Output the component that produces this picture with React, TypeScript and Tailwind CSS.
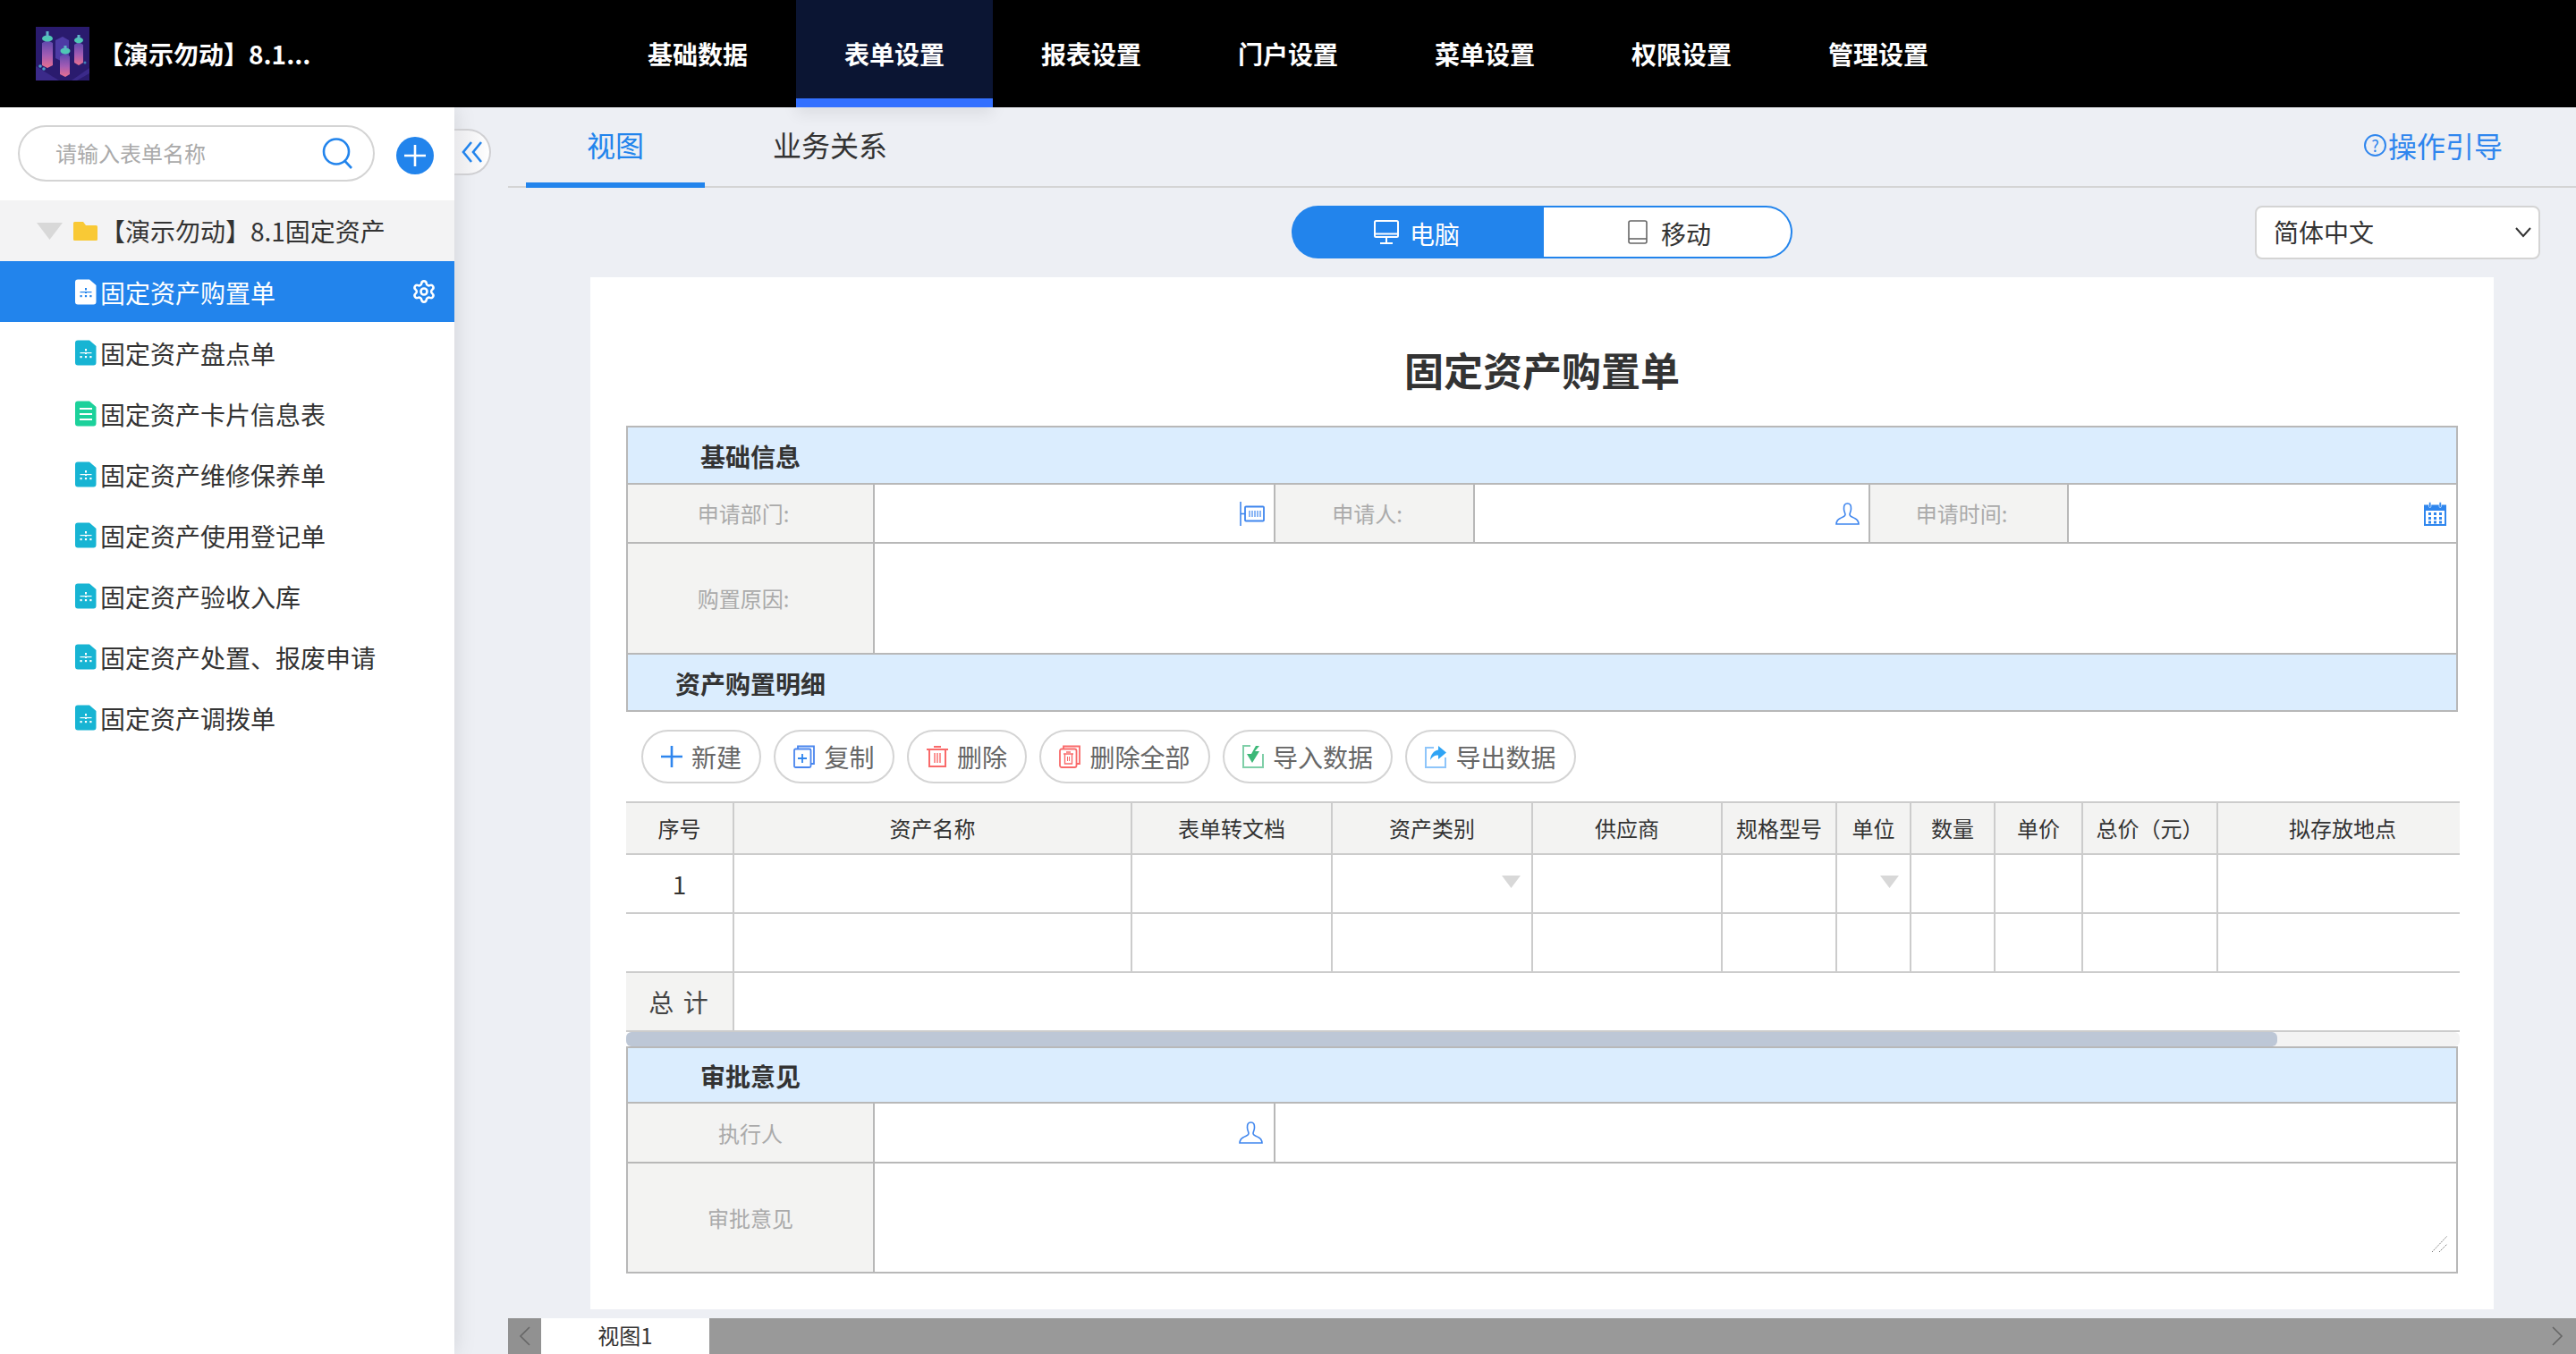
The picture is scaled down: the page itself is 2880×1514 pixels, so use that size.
import React from "react";
import { Settings } from "lucide-react";

const BLUE = "#2284ec";

function Logo() {
  return (
    <svg width="60" height="60" viewBox="0 0 60 60" className="shrink-0">
      <defs>
        <linearGradient id="lg1" x1="0" y1="0" x2="0" y2="1">
          <stop offset="0" stopColor="#5a48ad" />
          <stop offset="0.55" stopColor="#a45cb4" />
          <stop offset="1" stopColor="#e8708f" />
        </linearGradient>
        <filter id="soft"><feGaussianBlur stdDeviation="0.7" /></filter>
      </defs>
      <rect width="60" height="60" fill="#2a1b6e" />
      <g filter="url(#soft)">
        <path d="M0 44 L26 60 H40 L60 46 V52 L46 60 H0 Z" fill="#3a2a8a" />
        <path d="M22 15 L30 11 L37 15 V35 L30 39 L22 35 Z" fill="#4d3aa5" />
        <path d="M7 18 L13 15 L19 18 V43 L13 46 L7 43 Z" fill="url(#lg1)" />
        <path d="M43 20 L48 17 L53 20 V40 L48 43 L43 40 Z" fill="url(#lg1)" />
        <path d="M27 33 L33 30 L38 33 V53 L33 56 L27 53 Z" fill="url(#lg1)" />
        <ellipse cx="13" cy="13" rx="6" ry="3.6" fill="#4fc8b5" />
        <rect x="11.5" y="5" width="3" height="6" fill="#5fb3c8" />
        <ellipse cx="48" cy="15" rx="5" ry="3.2" fill="#4fc8b5" />
        <rect x="46.5" y="9" width="3" height="5" fill="#5fb3c8" />
        <ellipse cx="33" cy="27" rx="5.5" ry="3.4" fill="#4fc8b5" />
        <rect x="31.5" y="21" width="3" height="5" fill="#5fb3c8" />
        <circle cx="5" cy="44" r="1.8" fill="#4fa0c8" />
        <circle cx="9" cy="47" r="1.8" fill="#4fa0c8" />
        <circle cx="55" cy="40" r="1.5" fill="#3f7fb8" />
      </g>
    </svg>
  );
}

function DocIcon({ bg, fg, kind }: { bg: string; fg: string; kind: "org" | "list" }) {
  return (
    <svg width="24" height="29" viewBox="0 0 24 29" className="shrink-0">
      <path d="M3 0.5 H16 L23.5 7 V25.5 A3 3 0 0 1 20.5 28.5 H3 A3 3 0 0 1 0 25.5 V3.5 A3 3 0 0 1 3 0.5 Z" fill={bg} />
      {kind === "org" ? (
        <g fill={fg}>
          <rect x="11" y="10" width="2" height="2.5" />
          <rect x="11" y="14" width="2" height="2" />
          <rect x="5.5" y="14" width="13" height="1.2" />
          <rect x="5.5" y="18" width="2.2" height="2.2" />
          <rect x="10.9" y="18" width="2.2" height="2.2" />
          <rect x="16.3" y="18" width="2.2" height="2.2" />
        </g>
      ) : (
        <g fill={fg}>
          <rect x="5" y="8" width="14" height="2" />
          <rect x="5" y="14" width="14" height="2" />
          <rect x="5" y="20" width="14" height="2" />
        </g>
      )}
    </svg>
  );
}

function Triangle({ w, h }: { w: number; h: number }) {
  return (
    <svg width={w} height={h} viewBox="0 0 10 10" preserveAspectRatio="none" className="shrink-0">
      <path d="M0 0 H10 L5 10 Z" fill="#d8d8d8" />
    </svg>
  );
}

function PersonIcon() {
  return (
    <svg width="27" height="25" viewBox="0 0 27 25" fill="none" stroke="#3f86ee" strokeWidth="1.6" className="shrink-0">
      <path d="M13.5 1 C10.2 1 9.4 3.5 9.5 7 C9.6 10 11 11.5 11 13.2 C11 15.4 8.5 16.2 5.5 17.4 C2.5 18.6 1.2 20.5 1 24 H26 C25.8 20.5 24.5 18.6 21.5 17.4 C18.5 16.2 16 15.4 16 13.2 C16 11.5 17.4 10 17.5 7 C17.6 3.5 16.8 1 13.5 1 Z" />
    </svg>
  );
}

function DeptIcon() {
  return (
    <svg width="28" height="27" viewBox="0 0 28 27" fill="none" stroke="#3f86ee" className="shrink-0">
      <path d="M1 0 V27" strokeWidth="1.6" />
      <path d="M1 13.5 H6" strokeWidth="1.6" />
      <rect x="6" y="5.5" width="21" height="16" rx="1" strokeWidth="1.8" />
      <path d="M11 10 V17 M14 10 V17 M17 10 V17 M20 10 V17 M23 10 V17" strokeWidth="1.2" />
    </svg>
  );
}

function CalendarIcon() {
  return (
    <svg width="25" height="27" viewBox="0 0 25 27" className="shrink-0">
      <rect x="1" y="4.5" width="23" height="21.5" fill="none" stroke="#2f86ee" strokeWidth="2" />
      <rect x="1" y="4" width="23" height="6" fill="#2f86ee" />
      <rect x="5.5" y="0.5" width="2.4" height="6" rx="1.2" fill="#2f86ee" stroke="#fff" strokeWidth="0.6" />
      <rect x="17" y="0.5" width="2.4" height="6" rx="1.2" fill="#2f86ee" stroke="#fff" strokeWidth="0.6" />
      <g fill="#2f86ee">
        <rect x="5" y="12" width="3" height="3" />
        <rect x="11" y="12" width="3" height="3" />
        <rect x="17" y="12" width="3" height="3" />
        <rect x="5" y="17" width="3" height="3" />
        <rect x="11" y="17" width="3" height="3" />
        <rect x="17" y="17" width="3" height="3" />
        <rect x="5" y="21.5" width="3" height="3" />
        <rect x="11" y="21.5" width="3" height="3" />
        <rect x="17" y="21.5" width="3" height="3" />
      </g>
    </svg>
  );
}

function Pill({ icon, label }: { icon: React.ReactNode; label: string }) {
  return (
    <div className="h-[60px] px-[20px] flex items-center gap-[10.5px] rounded-full border-2 border-[#d4d4d4] bg-white text-[28px] leading-[36px] text-[#666]">
      <span className="w-[24px] h-[26px] flex items-center justify-center shrink-0">{icon}</span>
      <span className="whitespace-nowrap">{label}</span>
    </div>
  );
}

const PlusI = (
  <svg width="24" height="26" viewBox="0 0 24 26" fill="none" stroke="#2f86ee" strokeWidth="2.6">
    <path d="M12 1 V25 M0 13 H24" />
  </svg>
);
const CopyI = (
  <svg width="24" height="26" viewBox="0 0 24 26" fill="none" stroke="#4a86ee" strokeWidth="1.8">
    <path d="M5 4 V1.5 H23 V21 H19.5" />
    <rect x="1" y="4.5" width="18.5" height="20.5" rx="1.5" />
    <path d="M10 10 V20 M5 15 H15" stroke="#2f86ee" />
  </svg>
);
const TrashI = (
  <svg width="24" height="24" viewBox="0 0 24 24" fill="none" stroke="#f96a6a" strokeWidth="2">
    <path d="M0 4 H24" />
    <path d="M8 1 H16" />
    <path d="M3 4 V23 H21 V4" />
    <path d="M9 8 V19 M12 8 V19 M15 8 V19" strokeWidth="1.4" />
  </svg>
);
const TrashAllI = (
  <svg width="24" height="26" viewBox="0 0 24 26" fill="none" stroke="#f96a6a" strokeWidth="1.8">
    <path d="M5 4 V1.5 H23 V21 H19.5" />
    <rect x="1" y="4.5" width="18.5" height="20.5" rx="2" />
    <path d="M5 10 H16 M8 8 H13 M6.5 10 V21 H14.5 V10" strokeWidth="1.4" />
    <path d="M9.5 13 V18 M11.5 13 V18" strokeWidth="1" />
  </svg>
);
const ImportI = (
  <svg width="24" height="26" viewBox="0 0 24 26" fill="none">
    <path d="M9 1 H1 V25 H23 V10" stroke="#7fcfa8" strokeWidth="2" />
    <path d="M15 1 L19 1 L14 7 H19 L11 20 L5 10 H10 Z" fill="#3cb878" />
  </svg>
);
const ExportI = (
  <svg width="24" height="26" viewBox="0 0 24 26" fill="none">
    <path d="M10 3 H1 V25 H23 V14" stroke="#8ec5fa" strokeWidth="2" />
    <path d="M15 1 L24 8.5 L15 16 V11.5 C10.5 11.5 8 13.5 6 17 C6.5 10.5 10 6.5 15 5.5 Z" fill="#2fa4f5" />
  </svg>
);

const tree: { name: string; kind: "org" | "list" }[] = [
  { name: "固定资产盘点单", kind: "org" },
  { name: "固定资产卡片信息表", kind: "list" },
  { name: "固定资产维修保养单", kind: "org" },
  { name: "固定资产使用登记单", kind: "org" },
  { name: "固定资产验收入库", kind: "org" },
  { name: "固定资产处置、报废申请", kind: "org" },
  { name: "固定资产调拨单", kind: "org" },
];

const nav = ["基础数据", "表单设置", "报表设置", "门户设置", "菜单设置", "权限设置", "管理设置"];

const headers = ["序号", "资产名称", "表单转文档", "资产类别", "供应商", "规格型号", "单位", "数量", "单价", "总价（元）", "拟存放地点"];
const GRID = "grid grid-cols-[121px_445px_224px_224px_212px_128px_83px_94px_98px_151px_270px]";

function Label({ text, className }: { text: string; className: string }) {
  return (
    <div className={`bg-[#f3f3f2] flex items-center justify-center text-[24px] text-[#aaa] border-r-2 border-[#b8b8b8] shrink-0 ${className}`}>
      {text}
    </div>
  );
}

function SectionHead({ text, className }: { text: string; className: string }) {
  return (
    <div className={`bg-[#dbedfe] flex items-center ${className}`}>
      <div className="w-[274px] pt-[2px] text-center text-[28px] font-bold text-[#333]">{text}</div>
    </div>
  );
}

export default function App() {
  return (
    <div className="w-[2880px] h-[1514px] overflow-hidden flex flex-col bg-[#edeff4] font-['Noto_Sans_CJK_SC','Noto_Sans',sans-serif] text-[#333]">
      <header className="relative z-20 h-[120px] bg-black flex items-center shrink-0">
        <div className="w-[670px] pl-[40px] flex items-center gap-[10px] shrink-0">
          <Logo />
          <span className="text-[28px] font-bold text-white whitespace-nowrap">【演示勿动】8.1...</span>
        </div>
        {nav.map((n, i) => (
          <div
            key={n}
            className={
              i === 1
                ? "w-[220px] h-[120px] flex items-center justify-center bg-[#0b1533] border-b-[10px] border-[#3370ff] text-[28px] font-bold text-white pt-[10px] shadow-[0_8px_16px_rgba(0,0,0,0.07)]"
                : "w-[220px] h-[120px] flex items-center justify-center text-[28px] font-bold text-white"
            }
          >
            {n}
          </div>
        ))}
      </header>

      <div className="flex flex-1 min-h-0">
        <aside className="relative z-10 w-[508px] shrink-0 bg-white shadow-[0_0_24px_rgba(0,0,0,0.12)]">
          <div className="h-[104px] flex items-start pt-[20px] pl-[20px]">
            <div className="w-[399px] h-[63px] rounded-full border-2 border-[#d4d4d4] flex items-center pl-[40px] pr-[22px] justify-between">
              <span className="pb-[2px] text-[24px] text-[#aaa]">请输入表单名称</span>
              <svg width="35" height="35" viewBox="0 0 35 35" fill="none" stroke={BLUE} strokeWidth="2.6">
                <circle cx="16" cy="15.5" r="14" />
                <path d="M25.5 26 L33 34" />
              </svg>
            </div>
            <div className="ml-[24px] mt-[13px] w-[42px] h-[42px] rounded-full bg-[#2284ec] flex items-center justify-center">
              <svg width="26" height="26" viewBox="0 0 26 26" stroke="#fff" strokeWidth="2.6">
                <path d="M13 1 V25 M1 13 H25" />
              </svg>
            </div>
          </div>

          <div className="h-[68px] bg-[#f3f3f4] flex items-center pl-[41px]">
            <Triangle w={29} h={19} />
            <svg width="27" height="21" viewBox="0 0 27 21" className="ml-[12px] shrink-0">
              <path d="M1.5 0 H11 L14 4 H25.5 A1.5 1.5 0 0 1 27 5.5 V19.5 A1.5 1.5 0 0 1 25.5 21 H1.5 A1.5 1.5 0 0 1 0 19.5 V1.5 A1.5 1.5 0 0 1 1.5 0 Z" fill="#f9c935" />
            </svg>
            <span className="ml-[3px] text-[28px] whitespace-nowrap text-[#333]">【演示勿动】8.1固定资产</span>
          </div>

          <div className="h-[68px] bg-[#2284ec] flex items-center pl-[84px] pr-[21px] text-white">
            <DocIcon bg="#ffffff" fg="#2284ec" kind="org" />
            <span className="ml-[4px] pt-[2px] text-[28px] whitespace-nowrap">固定资产购置单</span>
            <Settings size={28} strokeWidth={2.2} color="#ffffff" className="ml-auto -mr-[1px]" />
          </div>

          {tree.map((t) => (
            <div key={t.name} className="h-[68px] flex items-center pl-[84px]">
              <DocIcon bg={t.kind === "org" ? "#17b4d3" : "#1cd19b"} fg="#ffffff" kind={t.kind} />
              <span className="ml-[4px] pt-[2px] text-[28px] whitespace-nowrap text-[#333]">{t.name}</span>
            </div>
          ))}
        </aside>

        <main className="relative flex-1 min-w-0 flex flex-col">
          <div className="absolute left-0 top-[24px] z-20 w-[41px] h-[52px] rounded-r-full border-2 border-l-0 border-[#cfcfd2] bg-gradient-to-r from-[#e9e9ec] to-white flex items-center justify-center">
            <svg width="24" height="24" viewBox="0 0 24 24" fill="none" stroke={BLUE} strokeWidth="2.6">
              <path d="M11 1 L2 12 L11 23" />
              <path d="M22 1 L13 12 L22 23" />
            </svg>
          </div>

          <div className="ml-[60px] h-[90px] shrink-0 flex border-b-2 border-[#d4d4d4]">
            <div className="ml-[20px] w-[200px] h-[90px] border-b-[6px] border-[#2284ec] flex items-center justify-center pb-[2px] text-[32px] text-[#2284ec]">
              视图
            </div>
            <div className="w-[280px] h-[84px] flex items-center justify-center pb-[2px] text-[32px] text-[#333]">业务关系</div>
            <div className="ml-auto mr-[82px] h-[84px] flex items-center text-[32px] text-[#2f86ee]">
              <span className="w-[25px] h-[25px] mr-[2px] rounded-full border-2 border-[#2f86ee] flex items-center justify-center text-[18px] leading-none">?</span>
              操作引导
            </div>
          </div>

          <div className="mt-[20px] h-[60px] shrink-0 flex pl-[936px]">
            <div className="w-[560px] h-[59px] flex">
              <div className="w-[282px] rounded-l-full bg-[#2284ec] flex items-center pl-[92px] text-white text-[28px]">
                <svg width="28" height="27" viewBox="0 0 28 27" fill="none" stroke="#fff" strokeWidth="2" className="shrink-0">
                  <rect x="1" y="1" width="26" height="18" rx="1.5" />
                  <path d="M1 15.5 H27 M14 19 V25 M7 26 H21" />
                </svg>
                <span className="ml-[12px] pt-[2px]">电脑</span>
              </div>
              <div className="w-[278px] rounded-r-full bg-white border-2 border-l-0 border-[#2284ec] flex items-center pl-[94px] text-[#333] text-[28px]">
                <svg width="22" height="27" viewBox="0 0 22 27" fill="none" stroke="#666" strokeWidth="1.6" className="shrink-0">
                  <rect x="1" y="1" width="20" height="25" rx="2" />
                  <path d="M1 21 H21" />
                </svg>
                <span className="ml-[15px] pt-[2px]">移动</span>
              </div>
            </div>
            <div className="ml-[517px] w-[319px] h-[60px] rounded-[8px] border-2 border-[#d4d4d4] bg-white flex items-center justify-between pl-[19px] pr-[8px] text-[28px] text-[#333]">
              <span className="pb-[2px]">简体中文</span>
              <svg width="18" height="12" viewBox="0 0 18 12" fill="none" stroke="#333" strokeWidth="2">
                <path d="M1 1 L9 10 L17 1" />
              </svg>
            </div>
          </div>

          <section className="mt-[20px] ml-[152px] w-[2128px] h-[1154px] shrink-0 bg-white pl-[40px]">
            <div className="h-[166px] flex items-center justify-center pt-[40px] pr-[40px] text-[44px] font-bold text-[#333]">固定资产购置单</div>

            <div className="w-[2048px] border-2 border-[#b8b8b8]">
              <SectionHead text="基础信息" className="h-[64px] border-b-2 border-[#b8b8b8]" />
              <div className="h-[66px] flex border-b-2 border-[#b8b8b8]">
                <Label text="申请部门:" className="w-[276px] pr-[16px]" />
                <div className="w-[448px] flex items-center justify-end pr-[10px] border-r-2 border-[#b8b8b8] shrink-0"><DeptIcon /></div>
                <Label text="申请人:" className="w-[223px] pr-[16px]" />
                <div className="w-[442px] flex items-center justify-end pr-[10px] border-r-2 border-[#b8b8b8] shrink-0"><PersonIcon /></div>
                <Label text="申请时间:" className="w-[222px] pr-[16px]" />
                <div className="flex-1 flex items-center justify-end pr-[11px]"><CalendarIcon /></div>
              </div>
              <div className="h-[124px] flex border-b-2 border-[#b8b8b8]">
                <Label text="购置原因:" className="w-[276px] pr-[16px]" />
                <div className="flex-1" />
              </div>
              <SectionHead text="资产购置明细" className="h-[62px]" />
            </div>

            <div className="h-[100px] flex items-center gap-[14px] pl-[16.5px]">
              <Pill icon={PlusI} label="新建" />
              <Pill icon={CopyI} label="复制" />
              <Pill icon={TrashI} label="删除" />
              <Pill icon={TrashAllI} label="删除全部" />
              <Pill icon={ImportI} label="导入数据" />
              <Pill icon={ExportI} label="导出数据" />
            </div>

            <div className="w-[2050px] border-t-2 border-[#ccc]">
              <div className={`${GRID} h-[58px] bg-[#f3f3f2] border-b-2 border-[#ccc]`}>
                {headers.map((h, i) => (
                  <div key={h} className={`flex items-center justify-center text-[24px] text-[#333] ${i < 10 ? "border-r-2 border-[#ccc]" : "pl-[8px]"}`}>
                    {h}
                  </div>
                ))}
              </div>
              <div className={`${GRID} h-[66px] border-b-2 border-[#ccc]`}>
                {headers.map((h, i) => (
                  <div key={h} className={`relative flex items-center justify-center text-[28px] text-[#333] ${i < 10 ? "border-r-2 border-[#ccc]" : ""}`}>
                    {i === 0 ? "1" : null}
                    {i === 3 || i === 6 ? (
                      <span className="absolute top-[23px] right-[12px]">
                        <Triangle w={21} h={14} />
                      </span>
                    ) : null}
                  </div>
                ))}
              </div>
              <div className={`${GRID} h-[66px] border-b-2 border-[#ccc]`}>
                {headers.map((h, i) => (
                  <div key={h} className={i < 10 ? "border-r-2 border-[#ccc]" : ""} />
                ))}
              </div>
              <div className="h-[66px] flex border-b-2 border-[#ccc]">
                <div className="w-[121px] bg-[#f3f3f2] border-r-2 border-[#ccc] flex items-center justify-center text-[28px] text-[#444] tracking-[2px]">总 计</div>
              </div>
              <div className="h-[16px] bg-[#f3f3f3] rounded-[6px]">
                <div className="w-[1846px] h-[16px] rounded-[6px] bg-[#bdc7d6]" />
              </div>
            </div>

            <div className="w-[2048px] border-2 border-[#b8b8b8]">
              <SectionHead text="审批意见" className="h-[62px] border-b-2 border-[#b8b8b8]" />
              <div className="h-[67px] flex border-b-2 border-[#b8b8b8]">
                <Label text="执行人" className="w-[276px]" />
                <div className="w-[448px] flex items-center justify-end pr-[12px] border-r-2 border-[#b8b8b8] shrink-0"><PersonIcon /></div>
              </div>
              <div className="h-[121px] flex">
                <Label text="审批意见" className="w-[276px]" />
                <div className="relative flex-1">
                  <svg width="17" height="18" viewBox="0 0 17 18" stroke="#777" strokeWidth="1" strokeDasharray="1.5 1" className="absolute right-[10px] bottom-[22px]">
                    <path d="M0 18 L17 0 M8 18 L17 9" />
                  </svg>
                </div>
              </div>
            </div>
          </section>

          <div className="mt-[10px] ml-[60px] h-[40px] shrink-0 bg-[#999] flex">
            <div className="w-[37px] bg-[#919191] flex items-center justify-center">
              <svg width="14" height="22" viewBox="0 0 14 22" fill="none" stroke="#666" strokeWidth="1.6">
                <path d="M12 1 L2 11 L12 21" />
              </svg>
            </div>
            <div className="w-[188px] bg-white flex items-center justify-center pb-[2px] text-[24px] text-[#333]">视图1</div>
            <div className="ml-auto pr-[14px] flex items-center">
              <svg width="14" height="22" viewBox="0 0 14 22" fill="none" stroke="#666" strokeWidth="1.6">
                <path d="M2 1 L12 11 L2 21" />
              </svg>
            </div>
          </div>
        </main>
      </div>
    </div>
  );
}
